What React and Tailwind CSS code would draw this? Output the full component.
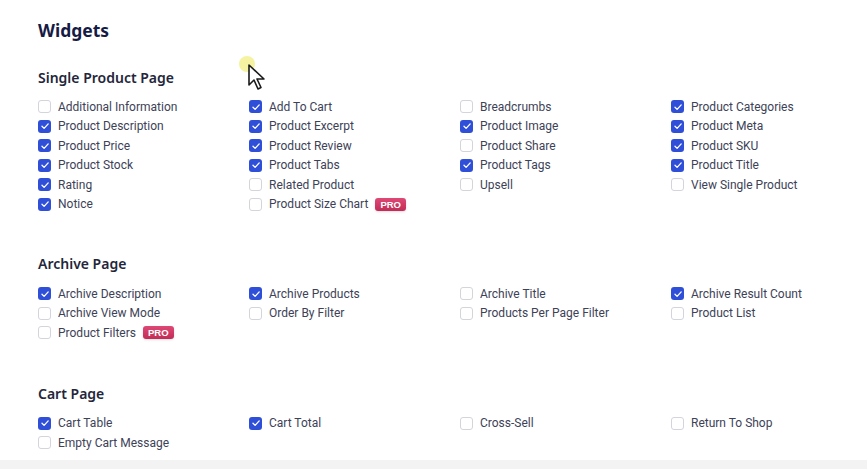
import React from "react";

// Widget lists for each page section
const sections = [
  {
    title: "Single Product Page",
    items: [
      ["Additional Information", false],
      ["Add To Cart", true],
      ["Breadcrumbs", false],
      ["Product Categories", true],
      ["Product Description", true],
      ["Product Excerpt", true],
      ["Product Image", true],
      ["Product Meta", true],
      ["Product Price", true],
      ["Product Review", true],
      ["Product Share", false],
      ["Product SKU", true],
      ["Product Stock", true],
      ["Product Tabs", true],
      ["Product Tags", true],
      ["Product Title", true],
      ["Rating", true],
      ["Related Product", false],
      ["Upsell", false],
      ["View Single Product", false],
      ["Notice", true],
      ["Product Size Chart", false, true],
    ],
  },
  {
    title: "Archive Page",
    items: [
      ["Archive Description", true],
      ["Archive Products", true],
      ["Archive Title", false],
      ["Archive Result Count", true],
      ["Archive View Mode", false],
      ["Order By Filter", false],
      ["Products Per Page Filter", false],
      ["Product List", false],
      ["Product Filters", false, true],
    ],
  },
  {
    title: "Cart Page",
    items: [
      ["Cart Table", true],
      ["Cart Total", true],
      ["Cross-Sell", false],
      ["Return To Shop", false],
      ["Empty Cart Message", false],
    ],
  },
];

function Checkbox({ checked }) {
  if (checked) {
    return (
      <span className="flex h-[13px] w-[13px] shrink-0 items-center justify-center rounded-[3px] bg-[#2f4fd8]">
        <svg width="10" height="10" viewBox="0 0 10 10" fill="none">
          <path d="M2 5.3l2.1 2.1L8.2 2.9" stroke="white" strokeWidth="1.3" strokeLinecap="round" strokeLinejoin="round" />
        </svg>
      </span>
    );
  }
  return <span className="h-[13px] w-[13px] shrink-0 rounded-[3px] border border-[#d3d5db] bg-white" />;
}

function Pro() {
  return (
    <span className="ml-[7px] flex h-[13px] items-center rounded-[3px] bg-gradient-to-b from-[#de4876] to-[#c22b56] px-[5px] font-['Liberation_Sans',sans-serif] text-[9.5px] font-bold leading-none text-white shadow-sm">
      PRO
    </span>
  );
}

function Section({ title, items, className, gap }) {
  return (
    <div className={className}>
      <h2 className="h-5 text-[14px] font-semibold leading-5 text-[#23263a]">{title}</h2>
      <div className={`grid grid-cols-[211px_211px_211px_211px] ${gap}`}>
        {items.map(([label, checked, pro]) => (
          <div key={label} className="flex h-[19.5px] items-center">
            <Checkbox checked={checked} />
            <span className="ml-[7px] font-['Roboto',sans-serif] text-[12px] text-[#3d4257]">{label}</span>
            {pro && <Pro />}
          </div>
        ))}
      </div>
    </div>
  );
}

export default function App() {
  return (
    <div className="relative h-[469px] w-[867px] overflow-hidden bg-white font-['Noto_Sans',sans-serif]">
      <div className="h-[460px] pl-[38px] pt-[18px]">
        <h1 className="h-6 text-[17.5px] font-bold leading-6 text-[#161b45]">Widgets</h1>
        <Section className="mt-[26px]" gap="mt-[9px]" {...sections[0]} />
        <Section className="mt-[40px]" gap="mt-[10px]" {...sections[1]} />
        <Section className="mt-[41px]" gap="mt-[10px]" {...sections[2]} />
      </div>
      <div className="h-[9px] bg-[#f3f3f4]" />

      {/* screen-recording cursor overlay */}
      <div className="pointer-events-none absolute left-[239px] top-[56px] h-4 w-4 rounded-full bg-[#f3f08a]/80" />
      <svg className="pointer-events-none absolute left-[247px] top-[63px]" width="20" height="28" viewBox="0 0 20 28">
        <path d="M2 2 L2 22 L7 17 L11 26 L14 24.5 L10 16 L17 16 Z" fill="white" stroke="#1a1a1a" strokeWidth="1.6" strokeLinejoin="round" />
      </svg>
    </div>
  );
}
